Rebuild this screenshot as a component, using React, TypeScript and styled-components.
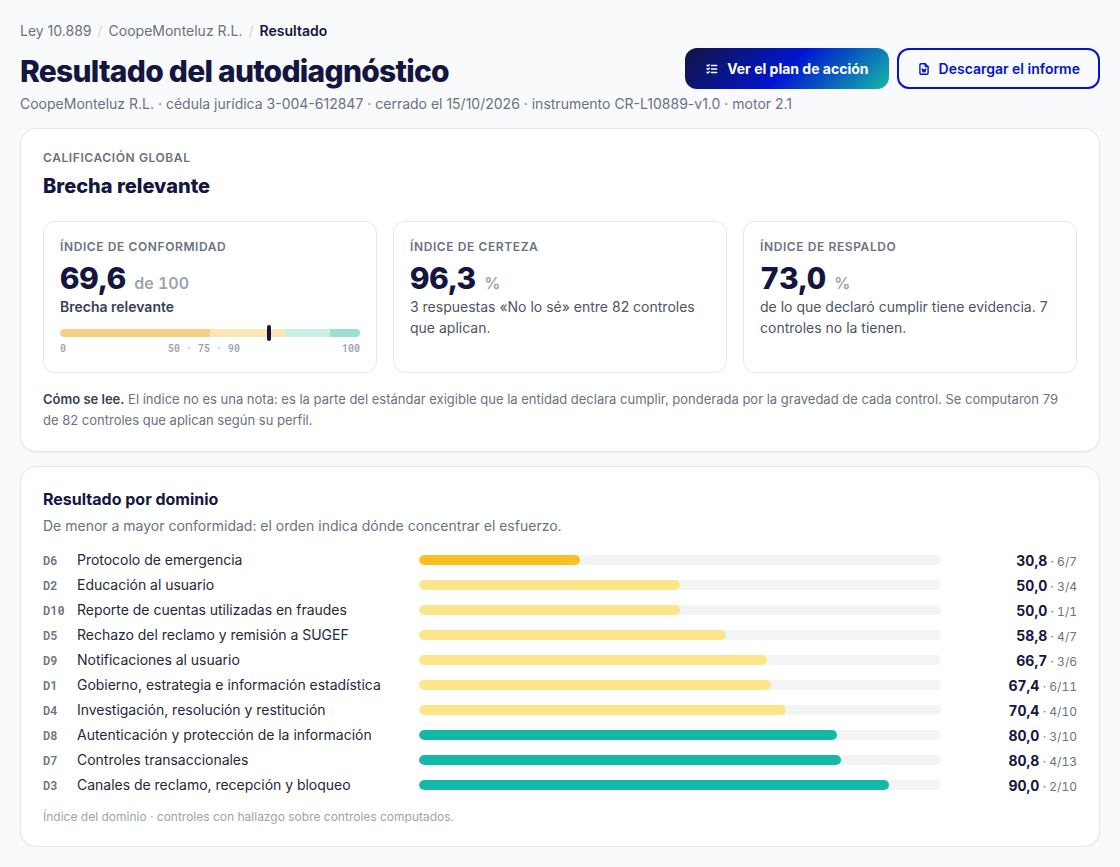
import styled, { createGlobalStyle } from "styled-components"
import { TbListCheck } from "react-icons/tb"

const NAVY = "#14163f"
const BLUE = "#0514cc"
const MONO = `"Roboto Mono", "Liberation Mono", monospace`

const domains = [
    { code: "D6", name: "Protocolo de emergencia", score: 30.8, found: "6/7" },
    { code: "D2", name: "Educación al usuario", score: 50, found: "3/4" },
    { code: "D10", name: "Reporte de cuentas utilizadas en fraudes", score: 50, found: "1/1" },
    { code: "D5", name: "Rechazo del reclamo y remisión a SUGEF", score: 58.8, found: "4/7" },
    { code: "D9", name: "Notificaciones al usuario", score: 66.7, found: "3/6" },
    { code: "D1", name: "Gobierno, estrategia e información estadística", score: 67.4, found: "6/11" },
    { code: "D4", name: "Investigación, resolución y restitución", score: 70.4, found: "4/10" },
    { code: "D8", name: "Autenticación y protección de la información", score: 80, found: "3/10" },
    { code: "D7", name: "Controles transaccionales", score: 80.8, found: "4/13" },
    { code: "D3", name: "Canales de reclamo, recepción y bloqueo", score: 90, found: "2/10" },
]

const barColor = (score: number) => {
    if (score < 50) return "#fbbf24"
    if (score < 75) return "#fde68a"
    return "#14b8a6"
}

const formatScore = (score: number) => score.toFixed(1).replace(".", ",")

const WordFileIcon = () => (
    <svg width="14" height="14" viewBox="0 0 24 24" fill="none" stroke="currentColor" strokeWidth="2.4" strokeLinecap="round" strokeLinejoin="round">
        <path d="M14 3v4a1 1 0 0 0 1 1h4" />
        <path d="M17 21h-10a2 2 0 0 1 -2 -2v-14a2 2 0 0 1 2 -2h7l5 5v11a2 2 0 0 1 -2 2z" />
        <path d="M9 12l1.333 5l1.667 -4l1.667 4l1.333 -5" />
    </svg>
)

const App = () => {
    return (
        <>
            <GlobalStyle />
            <Page>
                <Breadcrumb>
                    <span>Ley 10.889</span>
                    <i>/</i>
                    <span>CoopeMonteluz R.L.</span>
                    <i>/</i>
                    <b>Resultado</b>
                </Breadcrumb>
                <Header>
                    <Title>Resultado del autodiagnóstico</Title>
                    <Actions>
                        <Button $primary>
                            <TbListCheck size={14} strokeWidth={2.4} />
                            Ver el plan de acción
                        </Button>
                        <Button>
                            <WordFileIcon />
                            Descargar el informe
                        </Button>
                    </Actions>
                </Header>
                <Subtitle>
                    CoopeMonteluz R.L. · cédula jurídica 3-004-612847 · cerrado el 15/10/2026 · instrumento CR-L10889-v1.0 · motor 2.1
                </Subtitle>

                <Card>
                    <Label>Calificación global</Label>
                    <Grade>Brecha relevante</Grade>
                    <Stats>
                        <Stat>
                            <Label>Índice de conformidad</Label>
                            <Figure>69,6 <small>de 100</small></Figure>
                            <StatText $strong>Brecha relevante</StatText>
                            <Scale>
                                <Segment $size={50} $color="#f5d187" />
                                <Segment $size={25} $color="#fbe6b5" />
                                <Segment $size={15} $color="#cdeee7" />
                                <Segment $size={10} $color="#9bdfd3" />
                                <Marker style={{ left: "69.6%" }} />
                            </Scale>
                            <ScaleLabels>
                                <span>0</span>
                                <span>50 · 75 · 90</span>
                                <span>100</span>
                            </ScaleLabels>
                        </Stat>
                        <Stat>
                            <Label>Índice de certeza</Label>
                            <Figure>96,3 <small>%</small></Figure>
                            <StatText>3 respuestas «No lo sé» entre 82 controles que aplican.</StatText>
                        </Stat>
                        <Stat>
                            <Label>Índice de respaldo</Label>
                            <Figure>73,0 <small>%</small></Figure>
                            <StatText>de lo que declaró cumplir tiene evidencia. 7 controles no la tienen.</StatText>
                        </Stat>
                    </Stats>
                    <Note>
                        <b>Cómo se lee.</b> El índice no es una nota: es la parte del estándar exigible que la entidad declara cumplir, ponderada por la gravedad de cada control. Se computaron 79 de 82 controles que aplican según su perfil.
                    </Note>
                </Card>

                <DomainCard>
                    <SectionTitle>Resultado por dominio</SectionTitle>
                    <Lead>De menor a mayor conformidad: el orden indica dónde concentrar el esfuerzo.</Lead>
                    <Rows>
                        {domains.map((d) => (
                            <Row key={d.code}>
                                <Code>{d.code}</Code>
                                <Name>{d.name}</Name>
                                <Track>
                                    <Fill style={{ width: `${d.score}%`, background: barColor(d.score) }} />
                                </Track>
                                <Value>
                                    <b>{formatScore(d.score)}</b> · {d.found}
                                </Value>
                            </Row>
                        ))}
                    </Rows>
                    <Footnote>Índice del dominio · controles con hallazgo sobre controles computados.</Footnote>
                </DomainCard>
            </Page>
        </>
    )
}
export default App

const GlobalStyle = createGlobalStyle`
* {
    box-sizing: border-box;
}
body {
    margin: 0;
    background: #f9fafc;
    color: #1f2937;
    font-family: Inter, "Liberation Sans", sans-serif;
    font-size: 14px;
    line-height: 21px;
}
h1, h2, h3, p {
    margin: 0;
}
`

const Page = styled.main`
padding: 20px 20px 0;
`

const Breadcrumb = styled.nav`
display: flex;
gap: 6px;
color: #6b7280;
height: 21px;

i {
    font-style: normal;
    color: #d1d5db;
}
b {
    font-weight: 600;
    color: ${NAVY};
}
`

const Header = styled.header`
display: flex;
justify-content: space-between;
align-items: center;
height: 41px;
margin-top: 7px;
`

const Title = styled.h1`
font-size: 30px;
line-height: 36px;
font-weight: 800;
letter-spacing: -0.75px;
color: ${NAVY};
padding-top: 4px;
`

const Actions = styled.div`
display: flex;
gap: 8px;
`

const Button = styled.button<{ $primary?: boolean }>`
display: flex;
align-items: center;
gap: 8px;
height: 41px;
padding: ${(p) => (p.$primary ? "0 20px" : "0 18px")};
border: ${(p) => (p.$primary ? "0" : `2px solid ${BLUE}`)};
border-radius: 12px;
background: ${(p) => (p.$primary ? `linear-gradient(135deg, ${NAVY} 0%, #0014d0 50%, #14b8a6 100%)` : "transparent")};
color: ${(p) => (p.$primary ? "#fff" : BLUE)};
font-family: inherit;
font-size: 14px;
font-weight: ${(p) => (p.$primary ? 700 : 600)};
line-height: 21px;
white-space: nowrap;
`

const Subtitle = styled.p`
color: #6b7280;
margin-top: 4px;
`

const Card = styled.section`
height: 324px;
margin-top: 14px;
padding: 20px 22px;
border: 1px solid #e5e7eb;
border-radius: 16px;
background: #fff;
box-shadow: 0 1px 2px rgba(16, 24, 40, 0.06);
`

const DomainCard = styled(Card)`
height: 381px;
padding-top: 22px;
`

const Label = styled.div`
font-size: 12px;
line-height: 18px;
font-weight: 600;
letter-spacing: 0.6px;
text-transform: uppercase;
color: #6b7280;
`

const Grade = styled.h2`
font-size: 20px;
line-height: 28px;
font-weight: 800;
color: ${NAVY};
margin-top: 5px;
`

const Stats = styled.div`
display: grid;
grid-template-columns: repeat(3, 1fr);
gap: 16px;
margin-top: 21px;
`

const Stat = styled.div`
height: 152px;
padding: 16px;
border: 1px solid #e5e7eb;
border-radius: 12px;
`

const Figure = styled.div`
font-size: 30px;
line-height: 32px;
font-weight: 800;
font-variant-numeric: tabular-nums;
color: ${NAVY};
margin-top: 6px;

small {
    font-size: 16px;
    font-weight: 600;
    color: #9ca3af;
}
`

const StatText = styled.p<{ $strong?: boolean }>`
margin-top: -3px;
color: ${(p) => (p.$strong ? "#374151" : "#4b5563")};
font-weight: ${(p) => (p.$strong ? 600 : 400)};
`

const Scale = styled.div`
display: flex;
position: relative;
height: 8px;
margin-top: 12px;
`

const Segment = styled.div<{ $size: number; $color: string }>`
width: ${(p) => p.$size}%;
background: ${(p) => p.$color};

&:first-child {
    border-radius: 4px 0 0 4px;
}
&:nth-child(4) {
    border-radius: 0 4px 4px 0;
}
`

const Marker = styled.div`
position: absolute;
top: -4px;
width: 4px;
height: 16px;
margin-left: -2px;
border-radius: 2px;
background: ${NAVY};
`

const ScaleLabels = styled.div`
display: flex;
justify-content: space-between;
margin-top: 4px;
font-family: ${MONO};
font-size: 10px;
line-height: 15px;
font-weight: 600;
color: #9ca3af;
`

const Note = styled.p`
margin-top: 16px;
font-size: 13px;
color: #6b7280;

b {
    font-weight: 600;
    color: #374151;
}
`

const SectionTitle = styled.h3`
font-size: 16px;
line-height: 21px;
font-weight: 700;
color: ${NAVY};
`

const Lead = styled.p`
margin-top: 5px;
color: #6b7280;
`

const Rows = styled.div`
display: grid;
gap: 4px;
margin-top: 13px;
`

const Row = styled.div`
display: grid;
grid-template-columns: 22px 330px 1fr 124px;
grid-template-rows: 21px;
gap: 12px;
align-items: center;
`

const Code = styled.span`
padding-top: 2px;
font-family: ${MONO};
font-size: 12px;
font-weight: 600;
color: #6b7280;
`

const Name = styled.span`
letter-spacing: -0.02px;
`

const Track = styled.div`
height: 10px;
border-radius: 5px;
background: #f3f4f6;
overflow: hidden;
`

const Fill = styled.div`
height: 100%;
border-radius: 5px;
`

const Value = styled.span`
padding-top: 3px;
text-align: right;
font-size: 12px;
color: #6b7280;
font-variant-numeric: tabular-nums;

b {
    font-size: 14px;
    font-weight: 700;
    color: ${NAVY};
}
`

const Footnote = styled.p`
margin-top: 11px;
font-size: 12px;
color: #9ca3af;
`
